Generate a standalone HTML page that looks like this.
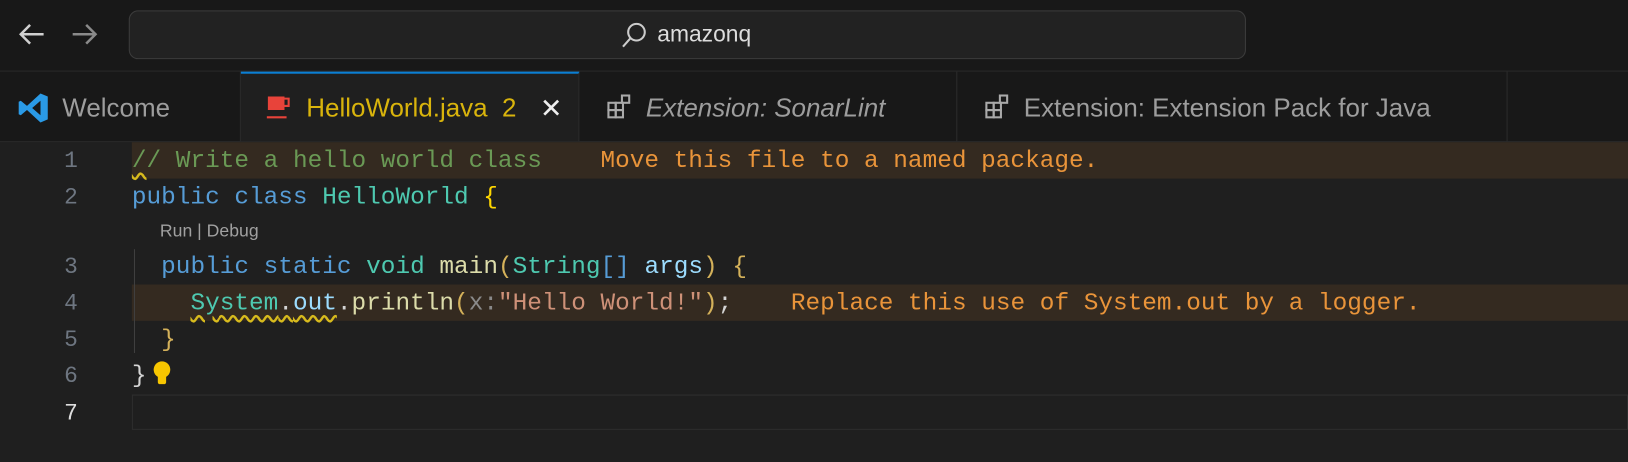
<!DOCTYPE html>
<html><head><meta charset="utf-8"><style>
html,body{margin:0;padding:0;background:#1f1f1f;overflow:hidden;width:1628px;height:462px}
#w{position:absolute;left:0;top:0;width:1568px;height:445px;transform:scale(1.0383);transform-origin:0 0;background:#1f1f1f;font-family:"Liberation Sans",sans-serif}
.abs{position:absolute}
#top{left:0;top:0;width:1568px;height:68px;background:#181818;border-bottom:1px solid #2b2b2b}
#search{left:124px;top:10px;width:1074px;height:45px;border:1px solid #3c3c3c;border-radius:9px;background:#222}
#tabs{left:0;top:69px;width:1568px;height:67px;background:#181818;border-bottom:1px solid #2b2b2b}
.tab{position:absolute;top:0;height:67px;border-right:1px solid #2b2b2b;color:#9d9d9d;font-size:25px;line-height:70px;box-sizing:border-box;white-space:nowrap}
.mono{font-family:"Liberation Mono",monospace;font-size:23.5px;white-space:pre;position:absolute;line-height:37px}
.ln{position:absolute;width:75px;text-align:right;color:#6e7681;font-family:"Liberation Mono",monospace;font-size:22px;line-height:37px}
.kw{color:#569cd6}.ty{color:#4ec9b0}.fn{color:#dcdcaa}.st{color:#ce9178}.cm{color:#6a9955}.pa{color:#9cdcfe}.br{color:#ffd700}.br2{color:#d4b15a}.wn{color:#e9943a}.pl{color:#d4d4d4}
.sq{text-decoration:underline wavy #d7ba1d;text-underline-offset:5px}
</style></head><body><div id="w">
<div id="top" class="abs">
<svg class="abs" style="left:16px;top:21px" width="28" height="24" viewBox="0 0 28 24"><path d="M26 12H4M13 3L4 12l9 9" stroke="#d0d0d0" stroke-width="2.4" fill="none"/></svg>
<svg class="abs" style="left:68px;top:21px" width="28" height="24" viewBox="0 0 28 24"><path d="M2 12h22M15 3l9 9-9 9" stroke="#8a8a8a" stroke-width="2.4" fill="none"/></svg>
<div id="search" class="abs">
<svg class="abs" style="left:472px;top:9px" width="28" height="28" viewBox="0 0 28 28"><circle cx="16" cy="11" r="8" stroke="#ccc" stroke-width="2" fill="none"/><path d="M10 17L3 25" stroke="#ccc" stroke-width="2"/></svg>
<div class="abs" style="left:508px;top:9px;color:#ddd;font-size:22px">amazonq</div>
</div></div>
<div id="tabs" class="abs">
<div class="tab" style="left:0;width:232px;padding-left:60px">
<svg class="abs" style="left:16px;top:19px" width="32" height="32" viewBox="0 0 32 32"><path d="M23 2L30 5v22l-7 3-13-12-6 5-2-1V10l2-1 6 5zM23 9l-8 7 8 7z" fill="#2a9ae6"/></svg>Welcome</div>
<div class="tab" style="left:232px;width:326px;background:#1f1f1f;border-top:2px solid #0b7fd4;padding-left:63px;color:#d9b40c;line-height:66px">
<svg class="abs" style="left:24px;top:20px" width="26" height="26" viewBox="0 0 26 26"><path d="M2 2h16v13H2z" fill="#e8433a"/><path d="M18 4h4v7h-4" stroke="#e8433a" stroke-width="2" fill="none"/><path d="M1 22h19" stroke="#e8433a" stroke-width="2"/></svg>HelloWorld.java&nbsp; 2
<span class="abs" style="left:288px;top:0;color:#eee;font-size:26px">✕</span></div>
<div class="tab" style="left:558px;width:364px;padding-left:64px;font-style:italic">
<svg class="abs" style="left:26px;top:21px" width="26" height="26" viewBox="0 0 26 26" fill="none" stroke="#aaa" stroke-width="2"><rect x="2" y="9" width="7" height="7"/><rect x="9" y="9" width="7" height="7"/><rect x="2" y="16" width="7" height="7"/><rect x="9" y="16" width="7" height="7"/><rect x="15" y="2" width="7" height="7"/></svg>Extension: SonarLint</div>
<div class="tab" style="left:922px;width:530px;padding-left:64px">
<svg class="abs" style="left:26px;top:21px" width="26" height="26" viewBox="0 0 26 26" fill="none" stroke="#aaa" stroke-width="2"><rect x="2" y="9" width="7" height="7"/><rect x="9" y="9" width="7" height="7"/><rect x="2" y="16" width="7" height="7"/><rect x="9" y="16" width="7" height="7"/><rect x="15" y="2" width="7" height="7"/></svg>Extension: Extension Pack for Java</div>
</div>
<div class="abs" style="left:127px;top:137px;width:1441px;height:35px;background:#342a20"></div>
<div class="abs" style="left:127px;top:274px;width:1441px;height:35px;background:#342a20"></div>
<div class="abs" style="left:127px;top:380px;width:1439px;height:32px;border:1px solid #2e2e2e"></div>
<div class="abs" style="left:129px;top:240px;width:1px;height:100px;background:#404040"></div>
<div class="ln" style="top:137px">1</div>
<div class="ln" style="top:172px">2</div>
<div class="ln" style="top:239px">3</div>
<div class="ln" style="top:274px">4</div>
<div class="ln" style="top:309px">5</div>
<div class="ln" style="top:344px">6</div>
<div class="ln" style="top:380px;color:#ddd">7</div>
<div class="mono" style="left:127px;top:137px"><span class="cm"><span class="sq">/</span>/ Write a hello world class</span>    <span class="wn">Move this file to a named package.</span></div>
<div class="mono" style="left:127px;top:172px"><span class="kw">public class </span><span class="ty">HelloWorld</span> <span class="br">{</span></div>
<div class="abs" style="left:154px;top:213px;color:#a0a0a0;font-size:17px">Run | Debug</div>
<div class="mono" style="left:127px;top:239px">  <span class="kw">public static </span><span class="ty">void</span> <span class="fn">main</span><span class="br2">(</span><span class="ty">String</span><span class="kw">[]</span> <span class="pa">args</span><span class="br2">)</span> <span class="br2">{</span></div>
<div class="mono" style="left:127px;top:274px">    <span class="sq"><span class="ty">System</span><span class="pl">.</span><span class="pa">out</span></span><span class="pl">.</span><span class="fn">println</span><span class="br2">(</span><span style="color:#8a8a8a">x:</span><span class="st">"Hello World!"</span><span class="br2">)</span><span class="pl">;</span>    <span class="wn">Replace this use of System.out by a logger.</span></div>
<div class="mono" style="left:127px;top:309px">  <span class="br2">}</span></div>
<div class="mono" style="left:127px;top:344px"><span class="pl">}</span></div>
<svg class="abs" style="left:146px;top:347px" width="20" height="28" viewBox="0 0 20 28"><circle cx="10" cy="9" r="8" fill="#f7c600"/><rect x="6" y="14" width="8" height="9" rx="2" fill="#f7c600"/></svg>
</div></body></html>
